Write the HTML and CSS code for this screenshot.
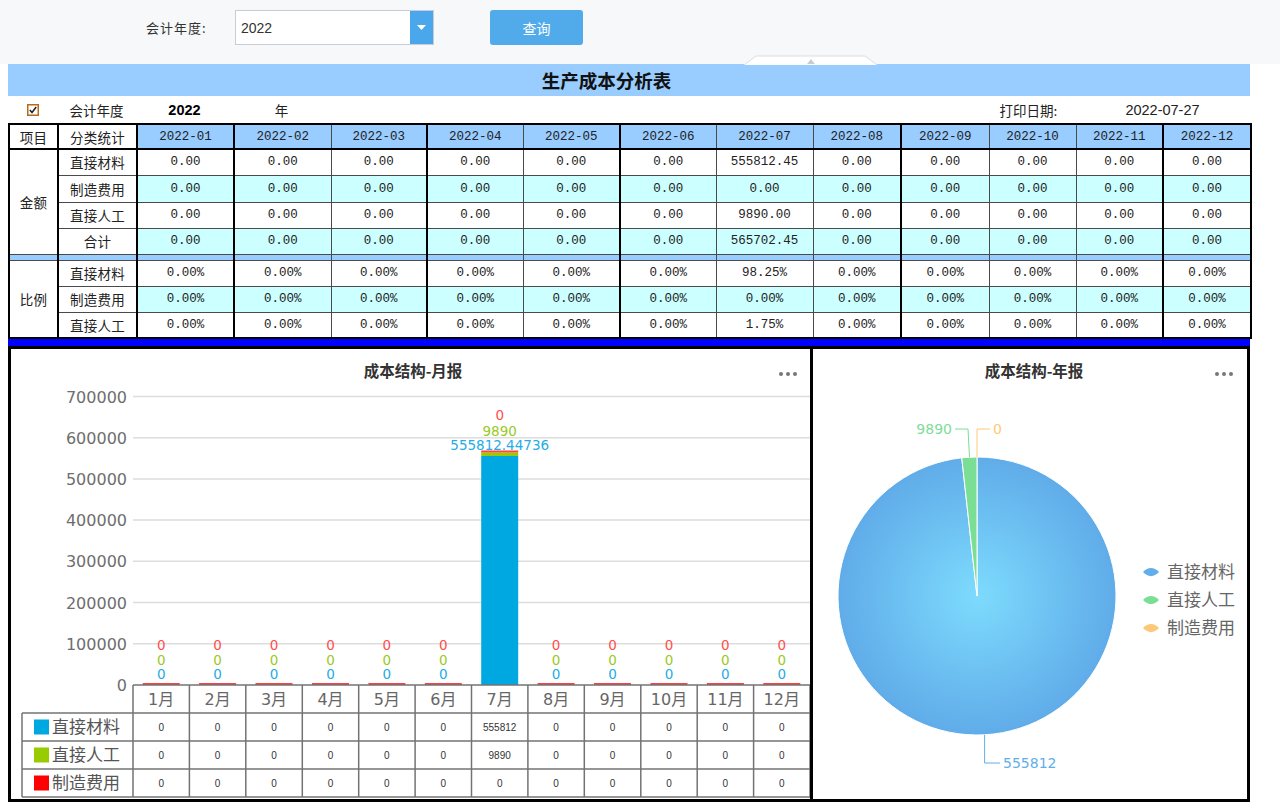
FILE: index.html
```html
<!DOCTYPE html>
<html lang="zh-CN">
<head>
<meta charset="utf-8">
<title>生产成本分析表</title>
<link rel="stylesheet" href="styles.css">
</head>
<body>
<div class="toolbar">
  <span class="tb-label">会计年度:</span>
  <div class="select">
    <span class="select-val">2022</span>
    <span class="select-btn"><svg width="9" height="5" viewBox="0 0 9 5"><path d="M0,0 L9,0 L4.5,5 Z" fill="#fff"/></svg></span>
  </div>
  <button class="query">查询</button>
  <svg class="collapse-tab" width="134" height="10" viewBox="0 0 134 10"><path d="M0,10 L12,1 L121,1 L133,10" fill="#fff" stroke="#dcdde2"/><path d="M63,9 L67,4 L71,9 Z" fill="#c9cbd2"/></svg>
</div>

<div class="report">
  <div class="title-bar">生产成本分析表</div>
  <div class="info-row">
    <span class="ck"><svg width="12" height="12" viewBox="0 0 12 12"><rect x="0.75" y="0.75" width="10.5" height="10.5" fill="#fff" stroke="#b86a1c" stroke-width="1.5"/><path d="M2.8,6 L5,8.5 L9.2,3" fill="none" stroke="#222" stroke-width="1.6"/></svg></span>
    <span class="cj">会计年度</span>
    <span class="yr">2022</span>
    <span class="cj">年</span>
    <span class="cj print">打印日期:</span>
    <span class="date">2022-07-27</span>
  </div>

  <table class="cost">
    <colgroup>
      <col class="tk"><col class="tk"><col class="tk"><col><col class="tk"><col><col class="tk"><col><col><col class="tk"><col><col><col class="tk"><col>
    </colgroup>
    <tr class="hdr">
      <td class="lbl">项目</td><td class="lbl">分类统计</td>
      <td class="m">2022-01</td><td class="m">2022-02</td><td class="m">2022-03</td><td class="m">2022-04</td><td class="m">2022-05</td><td class="m">2022-06</td><td class="m">2022-07</td><td class="m">2022-08</td><td class="m">2022-09</td><td class="m">2022-10</td><td class="m">2022-11</td><td class="m">2022-12</td>
    </tr>
    <tr class="r26">
      <td class="lbl" rowspan="4">金额</td><td class="lbl">直接材料</td>
      <td>0.00</td><td>0.00</td><td>0.00</td><td>0.00</td><td>0.00</td><td>0.00</td><td>555812.45</td><td>0.00</td><td>0.00</td><td>0.00</td><td>0.00</td><td>0.00</td>
    </tr>
    <tr class="r27 cy">
      <td class="lbl">制造费用</td>
      <td>0.00</td><td>0.00</td><td>0.00</td><td>0.00</td><td>0.00</td><td>0.00</td><td>0.00</td><td>0.00</td><td>0.00</td><td>0.00</td><td>0.00</td><td>0.00</td>
    </tr>
    <tr class="r26">
      <td class="lbl">直接人工</td>
      <td>0.00</td><td>0.00</td><td>0.00</td><td>0.00</td><td>0.00</td><td>0.00</td><td>9890.00</td><td>0.00</td><td>0.00</td><td>0.00</td><td>0.00</td><td>0.00</td>
    </tr>
    <tr class="r26 cy">
      <td class="lbl">合计</td>
      <td>0.00</td><td>0.00</td><td>0.00</td><td>0.00</td><td>0.00</td><td>0.00</td><td>565702.45</td><td>0.00</td><td>0.00</td><td>0.00</td><td>0.00</td><td>0.00</td>
    </tr>
    <tr class="sep">
      <td></td><td></td><td></td><td></td><td></td><td></td><td></td><td></td><td></td><td></td><td></td><td></td><td></td><td></td>
    </tr>
    <tr class="r26">
      <td class="lbl" rowspan="3">比例</td><td class="lbl">直接材料</td>
      <td>0.00%</td><td>0.00%</td><td>0.00%</td><td>0.00%</td><td>0.00%</td><td>0.00%</td><td>98.25%</td><td>0.00%</td><td>0.00%</td><td>0.00%</td><td>0.00%</td><td>0.00%</td>
    </tr>
    <tr class="r26 cy">
      <td class="lbl">制造费用</td>
      <td>0.00%</td><td>0.00%</td><td>0.00%</td><td>0.00%</td><td>0.00%</td><td>0.00%</td><td>0.00%</td><td>0.00%</td><td>0.00%</td><td>0.00%</td><td>0.00%</td><td>0.00%</td>
    </tr>
    <tr class="r26">
      <td class="lbl">直接人工</td>
      <td>0.00%</td><td>0.00%</td><td>0.00%</td><td>0.00%</td><td>0.00%</td><td>0.00%</td><td>1.75%</td><td>0.00%</td><td>0.00%</td><td>0.00%</td><td>0.00%</td><td>0.00%</td>
    </tr>
  </table>

  <div class="blue-band"></div>

  <div class="charts">
    <div class="panel panel-left">
      <svg class="chart" width="799" height="450" viewBox="11 348 799 450">
        <text class="ctitle" x="413" y="376" text-anchor="middle">成本结构-月报</text>
        <g class="dots"><circle cx="781" cy="373" r="2"/><circle cx="788" cy="373" r="2"/><circle cx="795" cy="373" r="2"/></g>
        <g class="grid">
          <line x1="133" x2="810" y1="395.5" y2="395.5"/>
          <line x1="133" x2="810" y1="436.7" y2="436.7"/>
          <line x1="133" x2="810" y1="477.9" y2="477.9"/>
          <line x1="133" x2="810" y1="519.1" y2="519.1"/>
          <line x1="133" x2="810" y1="560.3" y2="560.3"/>
          <line x1="133" x2="810" y1="601.5" y2="601.5"/>
          <line x1="133" x2="810" y1="642.7" y2="642.7"/>
        </g>
        <g class="ylab">
          <text x="127" y="401.5">700000</text>
          <text x="127" y="442.7">600000</text>
          <text x="127" y="483.9">500000</text>
          <text x="127" y="525.1">400000</text>
          <text x="127" y="566.3">300000</text>
          <text x="127" y="607.5">200000</text>
          <text x="127" y="648.7">100000</text>
          <text x="127" y="690">0</text>
        </g>
        <g class="zbar">
          <rect x="142.7" y="682" width="37" height="2"/>
          <rect x="199.1" y="682" width="37" height="2"/>
          <rect x="255.5" y="682" width="37" height="2"/>
          <rect x="312" y="682" width="37" height="2"/>
          <rect x="368.4" y="682" width="37" height="2"/>
          <rect x="424.8" y="682" width="37" height="2"/>
          <rect x="537.6" y="682" width="37" height="2"/>
          <rect x="594" y="682" width="37" height="2"/>
          <rect x="650.5" y="682" width="37" height="2"/>
          <rect x="706.9" y="682" width="37" height="2"/>
          <rect x="763.3" y="682" width="37" height="2"/>
        </g>
        <rect x="481.2" y="455" width="37" height="229" fill="#00a8e1"/>
        <rect x="481.2" y="451.5" width="37" height="3.5" fill="#99cc00"/>
        <rect x="481.2" y="449.5" width="37" height="2" fill="#ff4444"/>
        <g class="blab">
          <g class="lr">
            <text x="161.2" y="649">0</text><text x="217.6" y="649">0</text><text x="274" y="649">0</text><text x="330.5" y="649">0</text><text x="386.9" y="649">0</text><text x="443.3" y="649">0</text><text x="499.7" y="419">0</text><text x="556.1" y="649">0</text><text x="612.5" y="649">0</text><text x="669" y="649">0</text><text x="725.4" y="649">0</text><text x="781.8" y="649">0</text>
          </g>
          <g class="lg">
            <text x="161.2" y="664">0</text><text x="217.6" y="664">0</text><text x="274" y="664">0</text><text x="330.5" y="664">0</text><text x="386.9" y="664">0</text><text x="443.3" y="664">0</text><text x="499.7" y="435">9890</text><text x="556.1" y="664">0</text><text x="612.5" y="664">0</text><text x="669" y="664">0</text><text x="725.4" y="664">0</text><text x="781.8" y="664">0</text>
          </g>
          <g class="lb">
            <text x="161.2" y="678">0</text><text x="217.6" y="678">0</text><text x="274" y="678">0</text><text x="330.5" y="678">0</text><text x="386.9" y="678">0</text><text x="443.3" y="678">0</text><text x="499.7" y="449">555812.44736</text><text x="556.1" y="678">0</text><text x="612.5" y="678">0</text><text x="669" y="678">0</text><text x="725.4" y="678">0</text><text x="781.8" y="678">0</text>
          </g>
        </g>
        <g class="tline">
          <line x1="133" x2="810" y1="684" y2="684"/>
          <line x1="22" x2="810" y1="712" y2="712"/>
          <line x1="22" x2="810" y1="740" y2="740"/>
          <line x1="22" x2="810" y1="768" y2="768"/>
          <line x1="22" x2="810" y1="796" y2="796"/>
          <line x1="22" x2="22" y1="712" y2="796"/>
          <line x1="133" x2="133" y1="684" y2="796"/>
          <line x1="189.4" x2="189.4" y1="684" y2="796"/>
          <line x1="245.8" x2="245.8" y1="684" y2="796"/>
          <line x1="302.3" x2="302.3" y1="684" y2="796"/>
          <line x1="358.7" x2="358.7" y1="684" y2="796"/>
          <line x1="415.1" x2="415.1" y1="684" y2="796"/>
          <line x1="471.5" x2="471.5" y1="684" y2="796"/>
          <line x1="527.9" x2="527.9" y1="684" y2="796"/>
          <line x1="584.3" x2="584.3" y1="684" y2="796"/>
          <line x1="640.8" x2="640.8" y1="684" y2="796"/>
          <line x1="697.2" x2="697.2" y1="684" y2="796"/>
          <line x1="753.6" x2="753.6" y1="684" y2="796"/>
          <line x1="810" x2="810" y1="684" y2="796"/>
        </g>
        <g class="mlab">
          <text x="161.2" y="704">1月</text><text x="217.6" y="704">2月</text><text x="274" y="704">3月</text><text x="330.5" y="704">4月</text><text x="386.9" y="704">5月</text><text x="443.3" y="704">6月</text><text x="499.7" y="704">7月</text><text x="556.1" y="704">8月</text><text x="612.5" y="704">9月</text><text x="669" y="704">10月</text><text x="725.4" y="704">11月</text><text x="781.8" y="704">12月</text>
        </g>
        <rect x="34" y="718.5" width="15" height="15" fill="#00a8e1"/>
        <rect x="34" y="746.5" width="15" height="15" fill="#99cc00"/>
        <rect x="34" y="774.5" width="15" height="15" fill="#ff0000"/>
        <g class="leglab">
          <text x="52" y="732">直接材料</text>
          <text x="52" y="760">直接人工</text>
          <text x="52" y="788">制造费用</text>
        </g>
        <g class="val">
          <text x="161.2" y="729.5">0</text><text x="217.6" y="729.5">0</text><text x="274" y="729.5">0</text><text x="330.5" y="729.5">0</text><text x="386.9" y="729.5">0</text><text x="443.3" y="729.5">0</text><text x="499.7" y="729.5">555812</text><text x="556.1" y="729.5">0</text><text x="612.5" y="729.5">0</text><text x="669" y="729.5">0</text><text x="725.4" y="729.5">0</text><text x="781.8" y="729.5">0</text>
          <text x="161.2" y="757.5">0</text><text x="217.6" y="757.5">0</text><text x="274" y="757.5">0</text><text x="330.5" y="757.5">0</text><text x="386.9" y="757.5">0</text><text x="443.3" y="757.5">0</text><text x="499.7" y="757.5">9890</text><text x="556.1" y="757.5">0</text><text x="612.5" y="757.5">0</text><text x="669" y="757.5">0</text><text x="725.4" y="757.5">0</text><text x="781.8" y="757.5">0</text>
          <text x="161.2" y="785.5">0</text><text x="217.6" y="785.5">0</text><text x="274" y="785.5">0</text><text x="330.5" y="785.5">0</text><text x="386.9" y="785.5">0</text><text x="443.3" y="785.5">0</text><text x="499.7" y="785.5">0</text><text x="556.1" y="785.5">0</text><text x="612.5" y="785.5">0</text><text x="669" y="785.5">0</text><text x="725.4" y="785.5">0</text><text x="781.8" y="785.5">0</text>
        </g>
      </svg>
    </div>
    <div class="panel panel-right">
      <svg class="chart" width="434" height="450" viewBox="813 348 434 450">
        <defs>
          <radialGradient id="pieBlue" gradientUnits="userSpaceOnUse" cx="977" cy="595" r="139">
            <stop offset="0" stop-color="#7ddbfd"/>
            <stop offset="1" stop-color="#60ace9"/>
          </radialGradient>
        </defs>
        <text class="ctitle" x="1034" y="376" text-anchor="middle">成本结构-年报</text>
        <g class="dots"><circle cx="1217" cy="373" r="2"/><circle cx="1224" cy="373" r="2"/><circle cx="1231" cy="373" r="2"/></g>
        <path d="M977,595 L977,456 A139,139 0 1,1 961.75,456.84 Z" fill="url(#pieBlue)" stroke="#fff" stroke-width="1"/>
        <path d="M977,595 L961.75,456.84 A139,139 0 0,1 977,456 Z" fill="#7adf94" stroke="#fff" stroke-width="1"/>
        <polyline points="969.5,456 968,428 955,428" fill="none" stroke="#7adf94" stroke-width="1"/>
        <polyline points="977,456 977,428 990,428" fill="none" stroke="#fcc97a" stroke-width="1"/>
        <polyline points="984.6,734 984.6,762 1000,762" fill="none" stroke="#62aeea" stroke-width="1"/>
        <text class="plab" x="952" y="433" text-anchor="end" fill="#80dc9a">9890</text>
        <text class="plab" x="993" y="433" fill="#fcc97a">0</text>
        <text class="plab" x="1003" y="767" fill="#62aeea">555812</text>
        <path d="M1143,571 C1148,565.5 1154,565.5 1159,571 C1154,576.5 1148,576.5 1143,571 Z" fill="#62aeea"/>
        <path d="M1143,599 C1148,593.5 1154,593.5 1159,599 C1154,604.5 1148,604.5 1143,599 Z" fill="#7adf94"/>
        <path d="M1143,627 C1148,621.5 1154,621.5 1159,627 C1154,632.5 1148,632.5 1143,627 Z" fill="#fcc97a"/>
        <g class="pleg">
          <text x="1167" y="577">直接材料</text>
          <text x="1167" y="605">直接人工</text>
          <text x="1167" y="633">制造费用</text>
        </g>
      </svg>
    </div>
  </div>
</div>
</body>
</html>
```

FILE: styles.css
```css
* { box-sizing: border-box; }

body {
  margin: 0;
  background: #ffffff;
  font-family: "Noto Sans CJK SC", "Liberation Sans", sans-serif;
  color: #222;
}

/* ---------- toolbar ---------- */
.toolbar {
  position: relative;
  height: 64px;
  background: #f7f8fa;
  display: flex;
  align-items: flex-start;
  padding: 10px 0 0 146px;
}
.tb-label {
  width: 89px;
  height: 35px;
  line-height: 35px;
  font-size: 13px;
  letter-spacing: 1px;
  color: #333;
}
.select {
  display: flex;
  width: 199px;
  height: 35px;
  border: 1px solid #c9cbd8;
  background: #fff;
}
.select-val {
  flex: 1;
  display: flex;
  align-items: center;
  padding-left: 5px;
  font: 14px "Liberation Sans", Arial, sans-serif;
  color: #333;
}
.select-btn {
  width: 23px;
  background: #4aa7eb;
  display: flex;
  align-items: center;
  justify-content: center;
}
.query {
  margin-left: 56px;
  width: 93px;
  height: 35px;
  border: 0;
  border-radius: 3px;
  background: #51abeb;
  color: #fff;
  font: 14px "Noto Sans CJK SC", sans-serif;
}
.collapse-tab {
  position: absolute;
  left: 744px;
  top: 55px;
}

/* ---------- report ---------- */
.report {
  width: 1242px;
  margin-left: 8px;
}
.title-bar {
  height: 32px;
  background: #99ccff;
  text-align: center;
  padding-right: 45px;
  font-size: 18.5px;
  font-weight: bold;
  line-height: 32px;
  color: #111;
}
.info-row {
  display: grid;
  grid-template-columns: 49px 79px 97px 97px 96px 96px 97px 96px 97px 88px 88px 87px 87px 88px;
  height: 27px;
  align-items: center;
}
.info-row > span { text-align: center; }
.info-row .ck { display: flex; justify-content: center; }
.info-row .cj { font-size: 13.5px; color: #222; }
.info-row .yr {
  font: 900 14.5px "Liberation Sans", Arial, sans-serif;
  color: #000;
}
.info-row .print { grid-column: 12; padding-right: 6px; }
.info-row .date {
  grid-column: 13 / span 2;
  font: 14.5px "Liberation Sans", Arial, sans-serif;
  color: #222;
}

/* ---------- table ---------- */
.cost {
  width: 1242px;
  border-collapse: collapse;
  table-layout: fixed;
  border: 2px solid #000;
}
.cost col:nth-child(1) { width: 49px; }
.cost col:nth-child(2) { width: 79px; }
.cost col:nth-child(3),
.cost col:nth-child(4),
.cost col:nth-child(7),
.cost col:nth-child(9) { width: 97px; }
.cost col:nth-child(5),
.cost col:nth-child(6),
.cost col:nth-child(8) { width: 96px; }
.cost col:nth-child(10),
.cost col:nth-child(11),
.cost col:nth-child(14) { width: 88px; }
.cost col:nth-child(12),
.cost col:nth-child(13) { width: 87px; }
.cost col.tk { border-right: 2px solid #000; }

.cost td {
  border: 1px solid #4a4a4a;
  padding: 0;
  text-align: center;
  font: 12.5px "Liberation Mono", "DejaVu Sans Mono", monospace;
  color: #222;
}
.cost td.lbl {
  font: 13.5px "Noto Sans CJK SC", sans-serif;
  letter-spacing: 0.3px;
}
.cost tr.hdr { height: 25px; }
.cost tr.hdr td { border-bottom: 2px solid #000; }
.cost tr.hdr td.m { background: #99ccff; }
.cost tr.r26 { height: 26px; }
.cost tr.r27 { height: 27px; }
.cost tr.cy td:not(.lbl) { background: #ccffff; }
.cost tr.sep { height: 6px; }
.cost tr.sep td { background: #99ccff; }

.blue-band {
  height: 7px;
  background: #0000ff;
}

/* ---------- charts ---------- */
.charts {
  display: flex;
  height: 456px;
}
.panel {
  background: #fff;
  border: 3px solid #000;
}
.panel-left { width: 805px; }
.panel-right { width: 437px; border-left: 0; }
.chart { display: block; }

.ctitle {
  font: bold 15.5px "Noto Sans CJK SC", sans-serif;
  fill: #333;
}
.dots circle { fill: #777; }
.grid line { stroke: #dddddd; stroke-width: 1.5; }
.ylab text {
  font: 16px "DejaVu Sans", sans-serif;
  fill: #6e6e6e;
  text-anchor: end;
}
.zbar rect { fill: #ff4040; }
.blab text {
  font: 13.5px "DejaVu Sans", sans-serif;
  text-anchor: middle;
}
.blab .lr text { fill: #ff4d4d; }
.blab .lg text { fill: #9bc91e; }
.blab .lb text { fill: #24ace4; }
.tline line { stroke: #737373; stroke-width: 1.5; }
.mlab text {
  font: 16px "DejaVu Sans", "Noto Sans CJK SC", sans-serif;
  fill: #666;
  text-anchor: middle;
}
.leglab text {
  font: 17px "Noto Sans CJK SC", sans-serif;
  fill: #555;
}
.val text {
  font: 10px "Liberation Sans", Arial, sans-serif;
  fill: #333;
  text-anchor: middle;
}
.plab {
  font: 14px "DejaVu Sans", sans-serif;
}
.pleg text {
  font: 17px "Noto Sans CJK SC", sans-serif;
  fill: #666;
}
```
